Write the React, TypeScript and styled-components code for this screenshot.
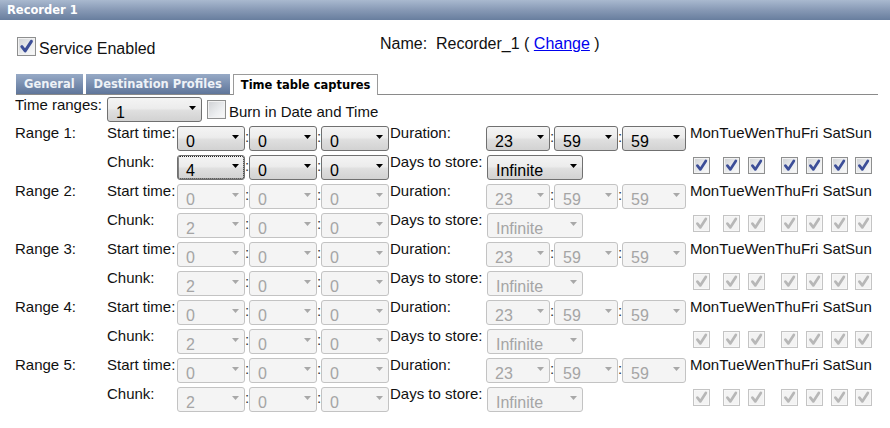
import React from 'react';
import styled, { createGlobalStyle, css } from 'styled-components';

const GlobalStyle = createGlobalStyle`
  html, body { margin: 0; padding: 0; background: #fff; }
  body { font-family: "Liberation Sans", Arial, sans-serif; color: #000; }
`;

const Page = styled.div`
  width: 890px;
  height: 428px;
  overflow: hidden;
  background: #fff;
`;

const Header = styled.div`
  height: 20px;
  box-sizing: border-box;
  padding-left: 7px;
  background: linear-gradient(#a9b9cf, #8799b5 50%, #687e9e);
  color: #fff;
  font: bold 11.5px/20px "DejaVu Sans", Verdana, sans-serif;
`;

const TopRow = styled.div`
  height: 54px;
  box-sizing: border-box;
  padding: 14px 0 0 17px;
  display: flex;
  align-items: flex-start;
`;

const ServiceItem = styled.label`
  width: 363px;
  display: flex;
  align-items: flex-start;
  gap: 3px;
`;

const BigText = styled.span<{ $mt?: number }>`
  font-size: 16px;
  line-height: 18px;
  margin-top: ${p => p.$mt ?? 0}px;
  white-space: nowrap;
  color: #111;
`;

const Link = styled.a`
  color: #0000ee;
  text-decoration: underline;
`;

const TabBar = styled.div`
  display: flex;
  align-items: flex-end;
  gap: 3px;
  height: 21px;
  box-sizing: border-box;
  margin: 0 12px 0 16px;
  border-bottom: 1px solid #8a8a8a;
`;

const Tab = styled.div<{ $active?: boolean }>`
  height: 20px;
  box-sizing: border-box;
  padding: 0 8px;
  font: bold 11.5px/20px "DejaVu Sans", Verdana, sans-serif;
  white-space: nowrap;
  color: #eef2f7;
  background: linear-gradient(#97aac6, #7a8fb0 50%, #5f769a);
  ${p => p.$active && css`
    height: 21px;
    margin-bottom: -1px;
    padding: 0 7px;
    color: #000;
    background: #fff;
    border: 1px solid #9a9a9a;
    border-bottom: none;
    line-height: 20px;
  `}
`;

const Content = styled.div`
  padding-left: 15px;
`;

const TimeRangesRow = styled.div`
  display: flex;
  align-items: flex-start;
  height: 31px;
`;

const Label = styled.span<{ $mt?: number; $ml?: number }>`
  font-size: 15px;
  line-height: 17px;
  white-space: nowrap;
  color: #111;
  margin-top: ${p => p.$mt ?? -2}px;
  margin-left: ${p => p.$ml ?? 0}px;
`;

const SelectBox = styled.div<{ $w: number; $disabled?: boolean; $focused?: boolean; $mt?: number; $ml?: number }>`
  box-sizing: border-box;
  flex: none;
  display: flex;
  align-items: flex-start;
  justify-content: space-between;
  width: ${p => p.$w}px;
  height: 25px;
  margin-top: ${p => p.$mt ?? 0}px;
  margin-left: ${p => p.$ml ?? 0}px;
  padding: 6px 5px 0 8px;
  border-radius: 3px;
  border: 1px solid ${p => (p.$disabled ? '#c3c3c3' : '#707070')};
  background: ${p =>
    p.$disabled ? '#f4f4f4' : 'linear-gradient(#f4f4f4, #ececec 45%, #dfdfdf 55%, #d2d2d2)'};
  color: ${p => (p.$disabled ? '#a5a5a5' : '#000')};
  font-size: 16px;
  line-height: 18px;
  ${p => p.$focused && css`
    outline: 1px dotted #222;
    outline-offset: -2px;
  `}
`;

const Arrow = styled.svg`
  flex: none;
  margin-top: 2px;
`;

const Colon = styled.span`
  flex: none;
  width: 4px;
  text-align: center;
  font-size: 15px;
  line-height: 22px;
  color: #333;
`;

const SelectGroup = styled.div`
  display: flex;
  align-items: flex-start;
`;

const CheckBox = styled.span<{ $size: number; $disabled?: boolean; $mt?: number; $ml?: number }>`
  box-sizing: border-box;
  flex: none;
  display: inline-flex;
  align-items: center;
  justify-content: center;
  width: ${p => p.$size}px;
  height: ${p => p.$size}px;
  margin-top: ${p => p.$mt ?? 0}px;
  margin-left: ${p => p.$ml ?? 0}px;
  border: 1px solid ${p => (p.$disabled ? '#c4c4c4' : '#8e8f8f')};
  background: ${p =>
    p.$disabled ? '#f3f3f3' : 'linear-gradient(135deg, #cfd1d4, #eceef0 60%, #fafafa)'};
  box-shadow: inset 0 0 0 1px ${p => (p.$disabled ? '#f7f7f7' : '#f2f2f2')};
`;

const RangeBlock = styled.div`
  display: grid;
  grid-template-columns: 92px 70px 213px 96px 204px auto;
  grid-auto-rows: 29px;
  align-items: start;
`;

const CheckRow = styled.div`
  display: flex;
  margin-top: 2px;
`;

const Check: React.FC<{ size: number; checked?: boolean; disabled?: boolean; mt?: number; ml?: number }> = ({
  size,
  checked,
  disabled,
  mt,
  ml,
}) => (
  <CheckBox $size={size} $disabled={disabled} $mt={mt} $ml={ml}>
    {checked && (
      <svg width={size - 2} height={size - 2} viewBox="0 0 15 15">
        <path
          d="M3.4 7.6 L6.3 11.4 L11.8 3.0"
          fill="none"
          stroke={disabled ? '#b7b7b7' : '#3c4e98'}
          strokeWidth={2.7}
          strokeLinecap="round"
          strokeLinejoin="round"
        />
      </svg>
    )}
  </CheckBox>
);

const Select: React.FC<{ w: number; value: string; disabled?: boolean; focused?: boolean; mt?: number; ml?: number }> = ({
  w,
  value,
  disabled,
  focused,
  mt,
  ml,
}) => (
  <SelectBox $w={w} $disabled={disabled} $focused={focused} $mt={mt} $ml={ml}>
    <span>{value}</span>
    <Arrow width="7" height="4" viewBox="0 0 7 4">
      <path d="M0 0 H7 L3.5 4 Z" fill={disabled ? '#a8a8a8' : '#000'} />
    </Arrow>
  </SelectBox>
);

const TripleSelect: React.FC<{ w: number; values: string[]; disabled?: boolean; focusFirst?: boolean }> = ({
  w,
  values,
  disabled,
  focusFirst,
}) => (
  <SelectGroup>
    {values.map((v, i) => (
      <React.Fragment key={i}>
        {i > 0 && <Colon>:</Colon>}
        <Select w={w} value={v} disabled={disabled} focused={focusFirst && i === 0} />
      </React.Fragment>
    ))}
  </SelectGroup>
);

const dayGaps = [3, 13, 8, 16, 8, 8, 7];

const ranges = [1, 2, 3, 4, 5];

export default function App() {
  return (
    <Page>
      <GlobalStyle />
      <Header>Recorder 1</Header>
      <TopRow>
        <ServiceItem>
          <Check size={19} checked mt={3} />
          <BigText $mt={6}>Service Enabled</BigText>
        </ServiceItem>
        <BigText $mt={1}>
          Name:&nbsp; Recorder_1 ( <Link href="#">Change</Link> )
        </BigText>
      </TopRow>
      <TabBar>
        <Tab>General</Tab>
        <Tab>Destination Profiles</Tab>
        <Tab $active>Time table captures</Tab>
      </TabBar>
      <Content>
        <TimeRangesRow>
          <Label $mt={1}>Time ranges:</Label>
          <Select w={95} value="1" mt={2} ml={5} />
          <Check size={19} mt={5} ml={5} />
          <Label $mt={8} $ml={3}>Burn in Date and Time</Label>
        </TimeRangesRow>
        {ranges.map(n => {
          const disabled = n !== 1;
          return (
            <RangeBlock key={n}>
              <Label>Range {n}:</Label>
              <Label>Start time:</Label>
              <TripleSelect w={68} values={['0', '0', '0']} disabled={disabled} />
              <Label>Duration:</Label>
              <TripleSelect w={64} values={['23', '59', '59']} disabled={disabled} />
              <Label>MonTueWenThuFri SatSun</Label>

              <span />
              <Label>Chunk:</Label>
              <TripleSelect w={68} values={[disabled ? '2' : '4', '0', '0']} disabled={disabled} focusFirst={!disabled} />
              <Label>Days to store:</Label>
              <Select w={96} value="Infinite" disabled={disabled} ml={1} />
              <CheckRow>
                {dayGaps.map((g, i) => (
                  <Check key={i} size={17} checked disabled={disabled} ml={g} />
                ))}
              </CheckRow>
            </RangeBlock>
          );
        })}
      </Content>
    </Page>
  );
}
